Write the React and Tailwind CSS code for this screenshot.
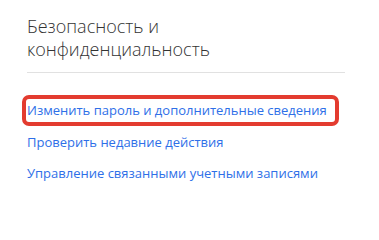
export default function App() {
  return (
    <div className="w-[379px] h-[234px] bg-white font-['Open_Sans',sans-serif]">
      <div className="ml-[27px] w-[318px] pt-[15px]">
        <h2 className="text-[18px] leading-[23px] font-light text-[#333]">
          Безопасность и
          <br />
          конфиденциальность
        </h2>
        <div className="mt-[11px] h-px bg-[#e1e1e1]" />
        <div className="mt-[22px] flex flex-col text-[13px] leading-[20px] text-[#2e6fe8] whitespace-nowrap">
          <div className="-ml-[5px] w-[317px] h-[31px] rounded-[7px] border-4 border-[#e33b2f] pl-[1px] pt-[1px]">
            <a href="#">Изменить пароль и дополнительные сведения</a>
          </div>
          <a href="#" className="mt-[6px]">Проверить недавние действия</a>
          <a href="#" className="mt-[11px]">Управление связанными учетными записями</a>
        </div>
      </div>
    </div>
  );
}
